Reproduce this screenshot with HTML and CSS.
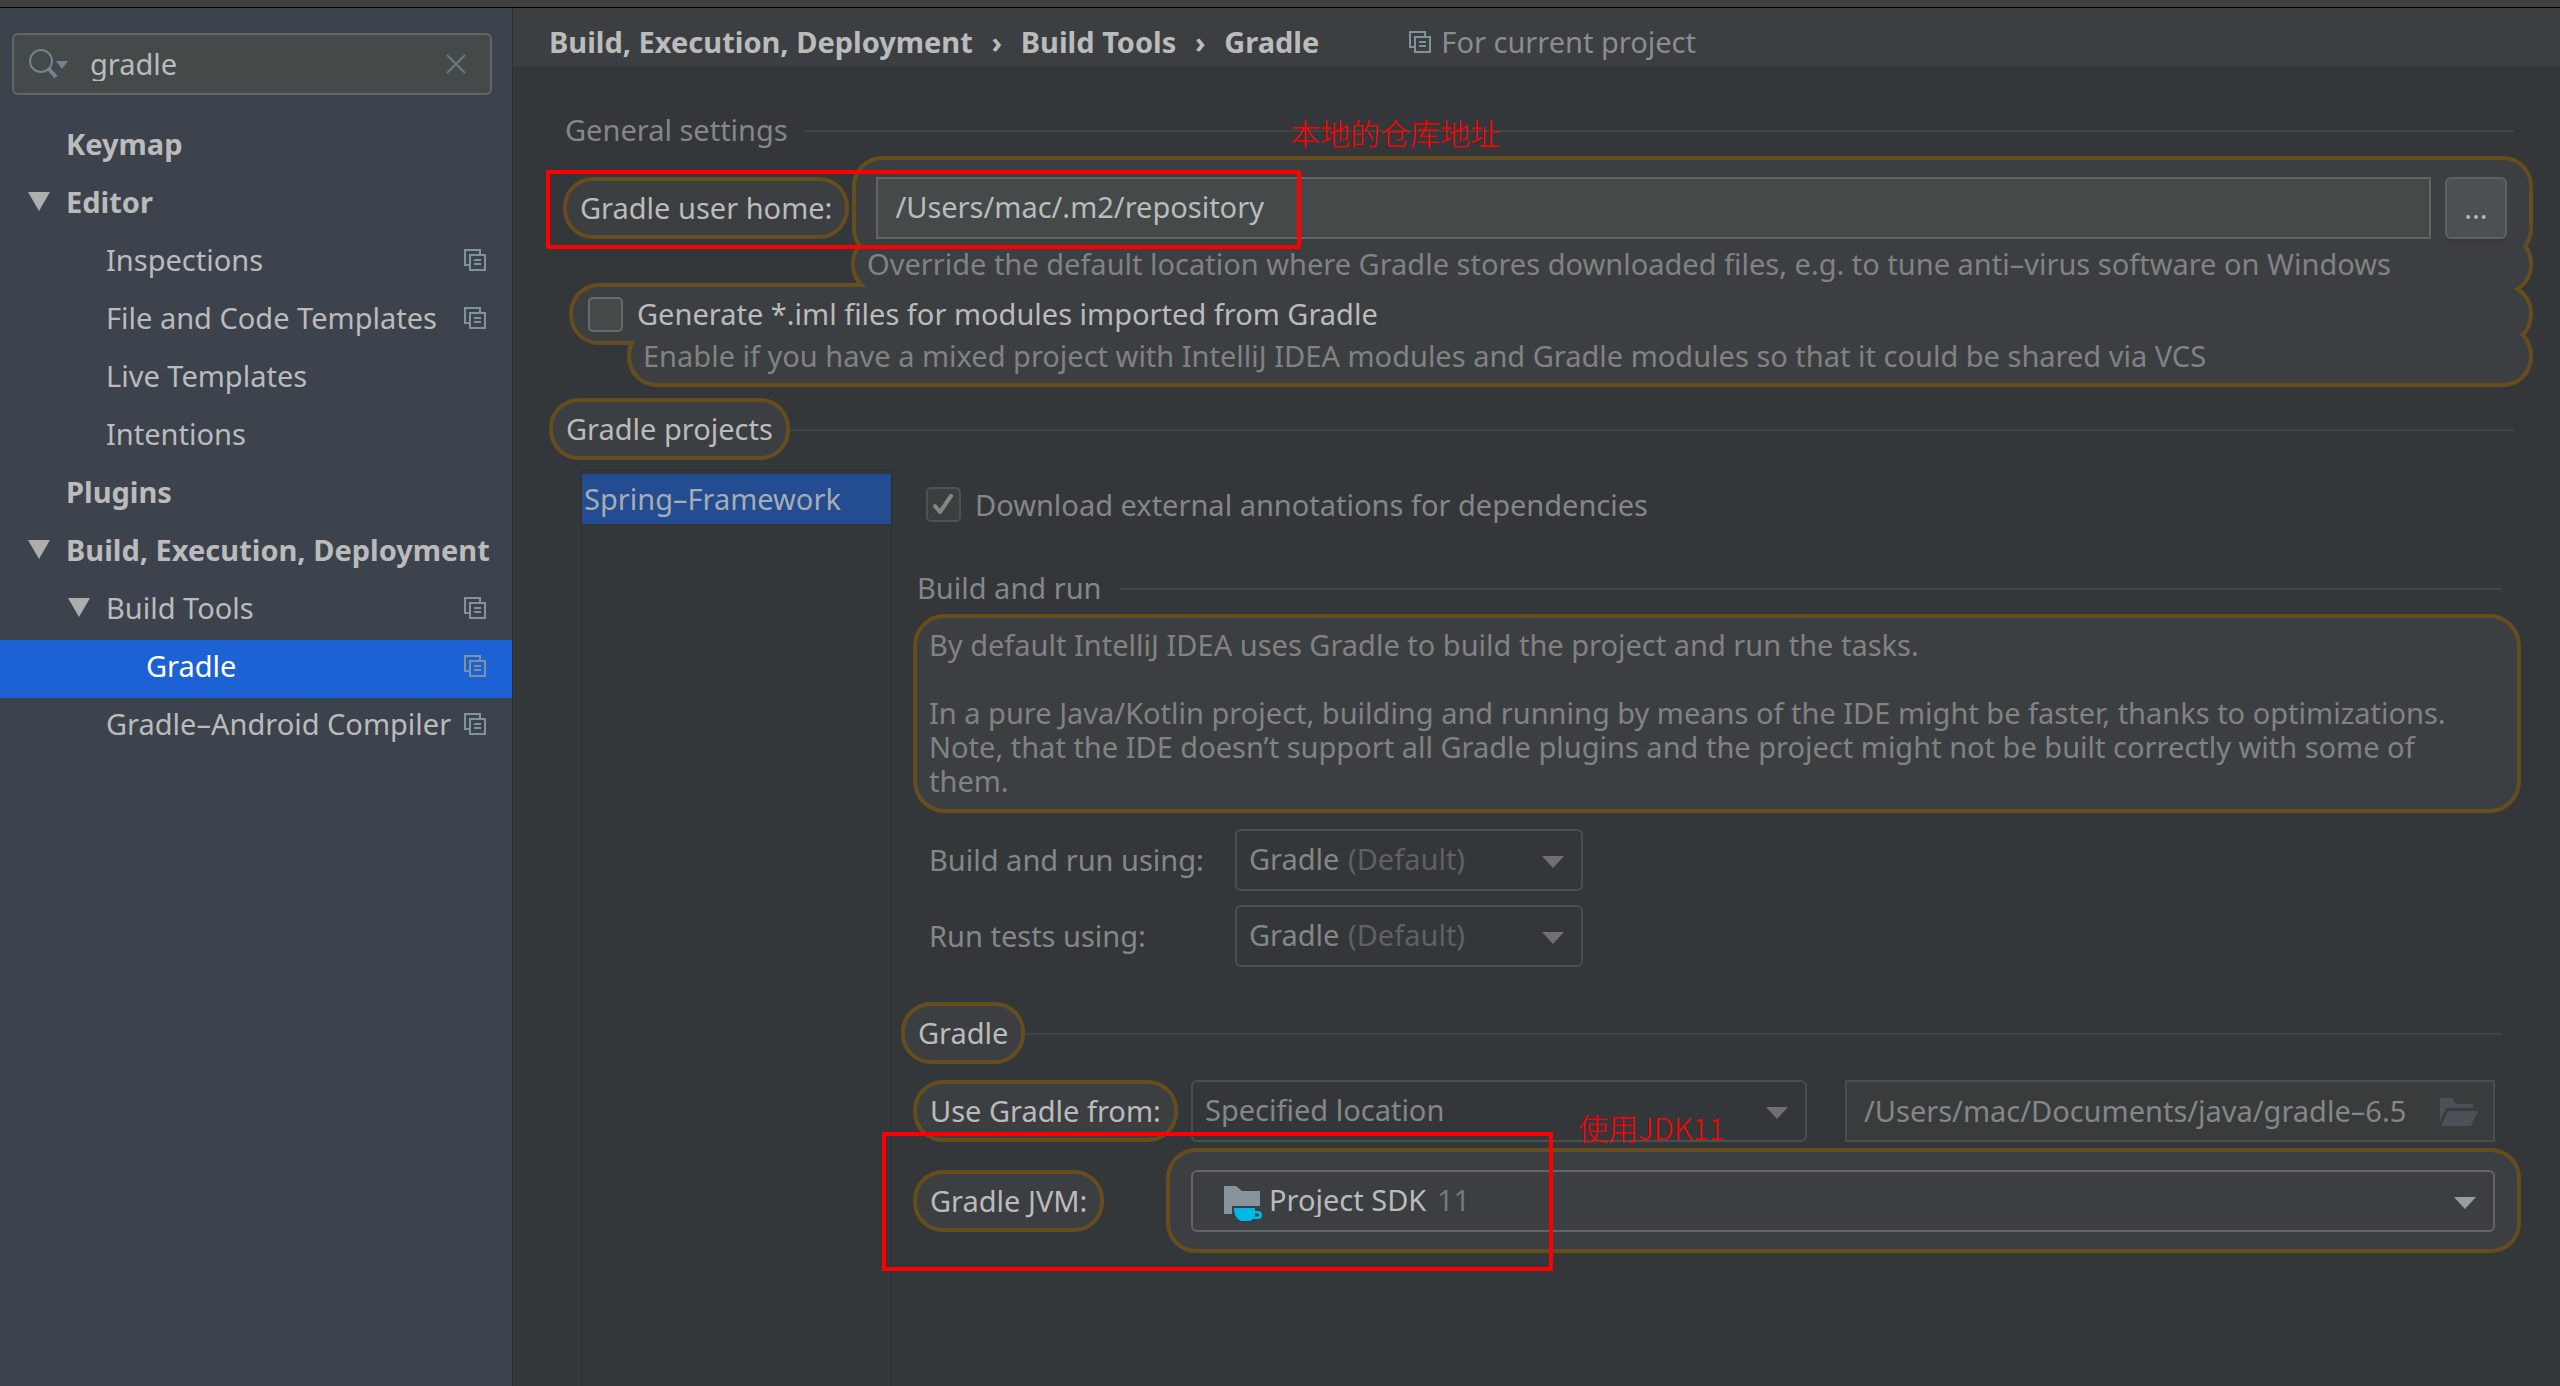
FILE: index.html
```html
<!DOCTYPE html>
<html lang="en">
<head>
<meta charset="utf-8">
<title>Preferences – Gradle</title>
<link rel="stylesheet" href="styles.css">
</head>
<body>
<svg class="defs" aria-hidden="true">
  <symbol id="scope" viewBox="0 0 22 22"><path d="M6 16H1V1h15v5M6 6h15v15H6zM10 11h7M10 15h7" fill="none" stroke="currentColor" stroke-width="2"/></symbol>
  <symbol id="expanded" viewBox="0 0 22 19"><path d="M0 0h22L11 19z" fill="currentColor"/></symbol>
  <symbol id="drop" viewBox="0 0 22 12"><path d="M0 0h22L11 12z" fill="currentColor"/></symbol>
</svg>
<div class="titlebar"></div>
<div class="dialog">
  <aside class="sidebar">
    <div class="search">
      <svg class="search-icon" viewBox="0 0 42 32" aria-hidden="true"><circle cx="13" cy="13" r="11" fill="none" stroke="currentColor" stroke-width="2"/><path d="M20 20l8 9" stroke="currentColor" stroke-width="4"/><path d="M28 13h12l-6 8z" fill="currentColor"/></svg>
      <input class="search-input" type="text" value="gradle" aria-label="Search settings">
      <button class="search-clear" type="button" aria-label="Clear"><svg viewBox="0 0 20 20"><path d="M1 1l18 18M19 1L1 19" stroke="currentColor" stroke-width="2"/></svg></button>
    </div>
    <nav class="tree">
      <a class="node top" href="#keymap">Keymap</a>
      <a class="node top" href="#editor"><svg class="arrow"><use href="#expanded"/></svg>Editor</a>
      <a class="node child" href="#inspections">Inspections<svg class="scope"><use href="#scope"/></svg></a>
      <a class="node child" href="#templates">File and Code Templates<svg class="scope"><use href="#scope"/></svg></a>
      <a class="node child" href="#live">Live Templates</a>
      <a class="node child" href="#intentions">Intentions</a>
      <a class="node top" href="#plugins">Plugins</a>
      <a class="node top" href="#build"><svg class="arrow"><use href="#expanded"/></svg>Build, Execution, Deployment</a>
      <a class="node child" href="#tools"><svg class="arrow"><use href="#expanded"/></svg>Build Tools<svg class="scope"><use href="#scope"/></svg></a>
      <a class="node leaf selected" href="#gradle" aria-current="page">Gradle<svg class="scope"><use href="#scope"/></svg></a>
      <a class="node child" href="#android">Gradle–Android Compiler<svg class="scope"><use href="#scope"/></svg></a>
    </nav>
  </aside>
  <main class="main">
    <header class="crumbs">
      <span>Build, Execution, Deployment</span><span class="sep">›</span><span>Build Tools</span><span class="sep">›</span><span>Gradle</span>
      <span class="for-project"><svg class="scope"><use href="#scope"/></svg>For current project</span>
    </header>
    <div class="content">
      <h2 class="heading general">General settings</h2>
      <div class="row home-row">
        <label class="pill home-label" for="home">Gradle user home:</label>
        <div class="spot home-spot">
          <input class="field" id="home" type="text" value="/Users/mac/.m2/repository">
          <button class="browse" type="button">...</button>
        </div>
        <div class="mark mark-home"></div>
        <div class="note note-home">本地的仓库地址</div>
      </div>
      <p class="spot hint home-hint">Override the default location where Gradle stores downloaded files, e.g. to tune anti–virus software on Windows</p>
      <label class="spot check-spot"><input class="check" type="checkbox">Generate *.iml files for modules imported from Gradle</label>
      <p class="spot hint iml-hint">Enable if you have a mixed project with IntelliJ IDEA modules and Gradle modules so that it could be shared via VCS</p>
      <h2 class="heading projects"><span class="pill">Gradle projects</span></h2>
      <div class="project-area">
        <ul class="project-list"><li class="project">Spring–Framework</li></ul>
        <section class="panel">
          <label class="annotations"><input class="check" type="checkbox" checked>Download external annotations for dependencies</label>
          <h3 class="heading build">Build and run</h3>
          <div class="info">
            <p>By default IntelliJ IDEA uses Gradle to build the project and run the tasks.</p>
            <p>In a pure Java/Kotlin project, building and running by means of the IDE might be faster, thanks to optimizations.<br>Note, that the IDE doesn’t support all Gradle plugins and the project might not be built correctly with some of them.</p>
          </div>
          <div class="row using">
            <label class="using-label" for="build-using">Build and run using:</label>
            <div class="combo using-combo"><select id="build-using"><option>Gradle</option><option>IntelliJ IDEA</option></select><span class="combo-extra">(Default)</span><svg class="drop"><use href="#drop"/></svg></div>
          </div>
          <div class="row using tests">
            <label class="using-label" for="test-using">Run tests using:</label>
            <div class="combo using-combo"><select id="test-using"><option>Gradle</option><option>IntelliJ IDEA</option></select><span class="combo-extra">(Default)</span><svg class="drop"><use href="#drop"/></svg></div>
          </div>
          <h3 class="heading gradle"><span class="pill">Gradle</span></h3>
          <div class="row from-row">
            <div class="label-col"><label class="pill" for="from">Use Gradle from:</label></div>
            <div class="combo from-combo"><select id="from"><option>Specified location</option></select><svg class="drop"><use href="#drop"/></svg></div>
            <div class="path">
              <input class="field" type="text" value="/Users/mac/Documents/java/gradle–6.5" aria-label="Gradle location" disabled>
              <svg class="folder" viewBox="0 0 38 28" aria-hidden="true"><path d="M0 24V0h12l4 6h17v4H6z" fill="currentColor"/><path d="M8 13h30l-7 15H1z" fill="currentColor"/></svg>
            </div>
          </div>
          <div class="row jvm-row">
            <div class="label-col jvm-col"><label class="pill" for="jvm">Gradle JVM:</label></div>
            <div class="spot jvm-spot">
              <div class="combo jvm-combo"><select id="jvm"><option>Project SDK</option></select>
                <svg class="sdk" viewBox="0 0 38 36" aria-hidden="true"><path d="M0 0h12l6 5h18v15H8v8H0z" fill="#87939a"/><path fill-rule="evenodd" d="M10 22h21v3h3a4 4 0 0 1 0 8h-5c-1 1-3 2-4 2h-8C12 33 10 28 10 22zM31 27.500v3h2.500a1.500 1.500 0 0 0 0-3z" fill="#00b8e6"/></svg>
                <span class="combo-extra">11</span><svg class="drop"><use href="#drop"/></svg></div>
            </div>
            <div class="mark mark-jvm"></div>
            <div class="note note-jvm">使用JDK11</div>
          </div>
        </section>
      </div>
    </div>
  </main>
</div>
</body>
</html>
```
FILE: styles.css
```css
* { box-sizing: border-box; margin: 0; padding: 0; }
body {
  display: flex; flex-direction: column; min-height: 100vh;
  background: #33373a; color: #bbbbbb;
  font: 29px/34px "Noto Sans", "Noto Sans CJK SC", sans-serif;
}
input, select, button { font: inherit; color: inherit; }
ul { list-style: none; }
svg { display: block; flex: none; }
.defs { position: absolute; width: 0; height: 0; }
.titlebar { height: 8px; background: #404040; border-bottom: 1px solid #000; }
.dialog { display: flex; flex: 1; }

.sidebar { flex: 0 0 512px; min-width: 0; background: #3c434d; padding-top: 25px; }
.search {
  display: flex; align-items: center; height: 62px; margin: 0 20px 0 12px; padding: 0 24px 0 14px;
  background: #434a49; border: 2px solid #646464; border-radius: 6px;
}
.search-icon { width: 42px; height: 32px; color: #738490; }
.search-input { flex: 1; min-width: 0; margin-left: 20px; background: none; border: 0; outline: 0; }
.search-clear { background: none; border: 0; color: #687a83; }
.search-clear svg { width: 20px; height: 20px; }
.tree { margin-top: 23px; }
.node {
  display: flex; align-items: center; height: 58px; padding: 0 26px 7px 66px;
  color: inherit; text-decoration: none; white-space: nowrap;
}
.top { font-weight: 700; }
.child { padding-left: 106px; }
.leaf { padding-left: 146px; }
.selected { background: #1d62d4; color: #fff; }
.arrow { width: 22px; height: 19px; margin: 0 16px 0 -38px; color: #aeaeae; }
.scope { width: 22px; height: 22px; color: #81929d; }
.node .scope { margin-left: auto; }

.main { display: flex; flex-direction: column; flex: 1; min-width: 0; border-left: 1px solid #2e3133; }
.crumbs {
  display: flex; align-items: center; height: 58px; padding: 10px 36px 0; background: #3c3f41;
  font-weight: 700; white-space: nowrap;
}
.sep { width: 48px; text-align: center; }
.for-project { display: flex; align-items: center; gap: 10px; margin-left: 90px; color: #8c8c8c; font-weight: 400; }

.content { display: flex; flex-direction: column; flex: 1; padding: 47px 27px 0 50px; isolation: isolate; }
.heading { display: flex; align-items: center; font-size: 29px; font-weight: 400; color: #868686; white-space: nowrap; }
.heading::after { content: ""; flex: 1; height: 2px; margin: 2px 19px 0 0; background: #414443; }
.general { margin-left: 2px; }
.general::after, .build::after { margin-left: 17px; }
.row { display: flex; align-items: center; position: relative; }
.pill {
  display: flex; align-items: center; height: 62px; padding: 0 13px;
  background: #3c3f41; border: 4px solid #664d1d; border-radius: 30px; color: #bbbbbb; white-space: nowrap;
}

/* Highlighted areas: outlines sit below all fills, so neighbours merge into one shape */
.spot { display: flex; align-items: center; position: relative; }
.spot::before, .spot::after { content: ""; position: absolute; }
.spot::before { inset: 0; z-index: -2; background: #664d1d; border-radius: 30px; }
.spot::after { inset: 4px; z-index: -1; background: #3c3f41; border-radius: 26px; }

.home-row { margin-top: 9px; }
.home-label { flex: 0 0 285px; }
.home-spot { flex: 1; gap: 14px; height: 103px; margin-left: 3px; padding: 0 26px 0 24px; }
.field { flex: 1; min-width: 0; height: 62px; padding: 0 17px 2px; background: #434a49; border: 2px solid #646464; outline: 0; }
.browse { width: 62px; height: 62px; background: #4b5052; border: 2px solid #5d6162; border-radius: 6px; box-shadow: 0 5px 0 #383a3b; }
.hint { height: 62px; color: #828282; white-space: nowrap; }
.home-hint { margin: -26px 0 0 288px; padding-left: 16px; }
.check-spot { height: 62px; margin: -12px 0 0 6px; padding-left: 19px; }
.iml-hint { margin: -20px 0 0 64px; padding-left: 16px; }
.check {
  appearance: none; width: 35px; height: 35px; margin-right: 14px; flex: none;
  background: #434a49; border: 2px solid #6a6a6a; border-radius: 5px;
}
.projects { margin: 11px 0 0 -14px; }

.project-area { display: flex; flex: 1; margin: 10px 0 0 18px; }
.project-list { flex: 0 0 311px; padding-top: 3px; border: 1px solid #2b2d2e; border-bottom: 0; }
.project { height: 50px; padding: 8px 2px; background: #244c90; color: #a6acb4; white-space: nowrap; }
.panel { flex: 1; min-width: 0; padding: 17px 12px 0 21px; }
.annotations { display: flex; align-items: center; margin-left: 13px; color: #868686; }
.annotations .check {
  border-color: #4f5252;
  background: #3a3f3f url("data:image/svg+xml,%3Csvg xmlns='http://www.w3.org/2000/svg' viewBox='0 0 31 31'%3E%3Cpath d='M7 17l5 6L23 7' fill='none' stroke='%23868686' stroke-width='4' stroke-linecap='round' stroke-linejoin='round'/%3E%3C/svg%3E");
}
.build { margin: 49px 0 0 4px; }
.info {
  display: flex; flex-direction: column; gap: 34px; margin-top: 9px; padding: 10px 40px 11px 12px;
  background: #3c3f41; border: 4px solid #664d1d; border-radius: 32px; color: #828282;
}
.using { margin: 16px 0 0 16px; color: #868686; }
.tests { margin-top: 14px; }
.using-label { flex: 0 0 306px; }
.combo { position: relative; height: 62px; }
.combo select {
  appearance: none; width: 100%; height: 62px; padding: 0 60px 2px 12px;
  background: none; border: 2px solid #4b4e4e; border-radius: 6px; outline: 0;
}
.drop { position: absolute; right: 19px; top: 27px; width: 22px; height: 12px; color: #6e7072; }
.combo-extra { position: absolute; top: 13px; left: 113px; color: #5f6162; }
.using-combo { width: 348px; }
.gradle { margin: 35px 0 0 -12px; }
.from-row { margin: 16px 26px 0 0; color: #868686; }
.label-col { display: flex; flex: 0 0 278px; }
.from-combo { flex: 616 0 0; }
.path { display: flex; position: relative; flex: 650 0 0; margin-left: 38px; }
.path .field { background: #393c3d; border-color: #4b4e4e; padding-right: 60px; }
.folder { position: absolute; right: 17px; top: 18px; width: 38px; height: 28px; color: #4c5157; }
.jvm-row { margin-top: 6px; }
.jvm-col { flex-basis: 253px; }
.jvm-spot { flex: 1; height: 105px; padding: 0 26px 0 25px; }
.jvm-combo { flex: 1; }
.jvm-combo select { padding-left: 76px; border-color: #646464; }
.jvm-combo .combo-extra { left: 246px; color: #787878; }
.jvm-combo .drop { color: #9a9da0; }
.sdk { position: absolute; left: 33px; top: 16px; width: 38px; height: 36px; }

.mark { position: absolute; border: 4px solid #ff0000; pointer-events: none; }
.mark-home { left: -17px; top: 14px; width: 755px; height: 79px; }
.mark-jvm { left: -31px; top: -16px; width: 671px; height: 139px; }
.note { position: absolute; color: #ff0000; font: 300 30px/40px "Noto Sans CJK SC", sans-serif; white-space: nowrap; }
.note-home { left: 727px; top: -44px; }
.note-jvm { left: 665px; top: -41px; }
```
